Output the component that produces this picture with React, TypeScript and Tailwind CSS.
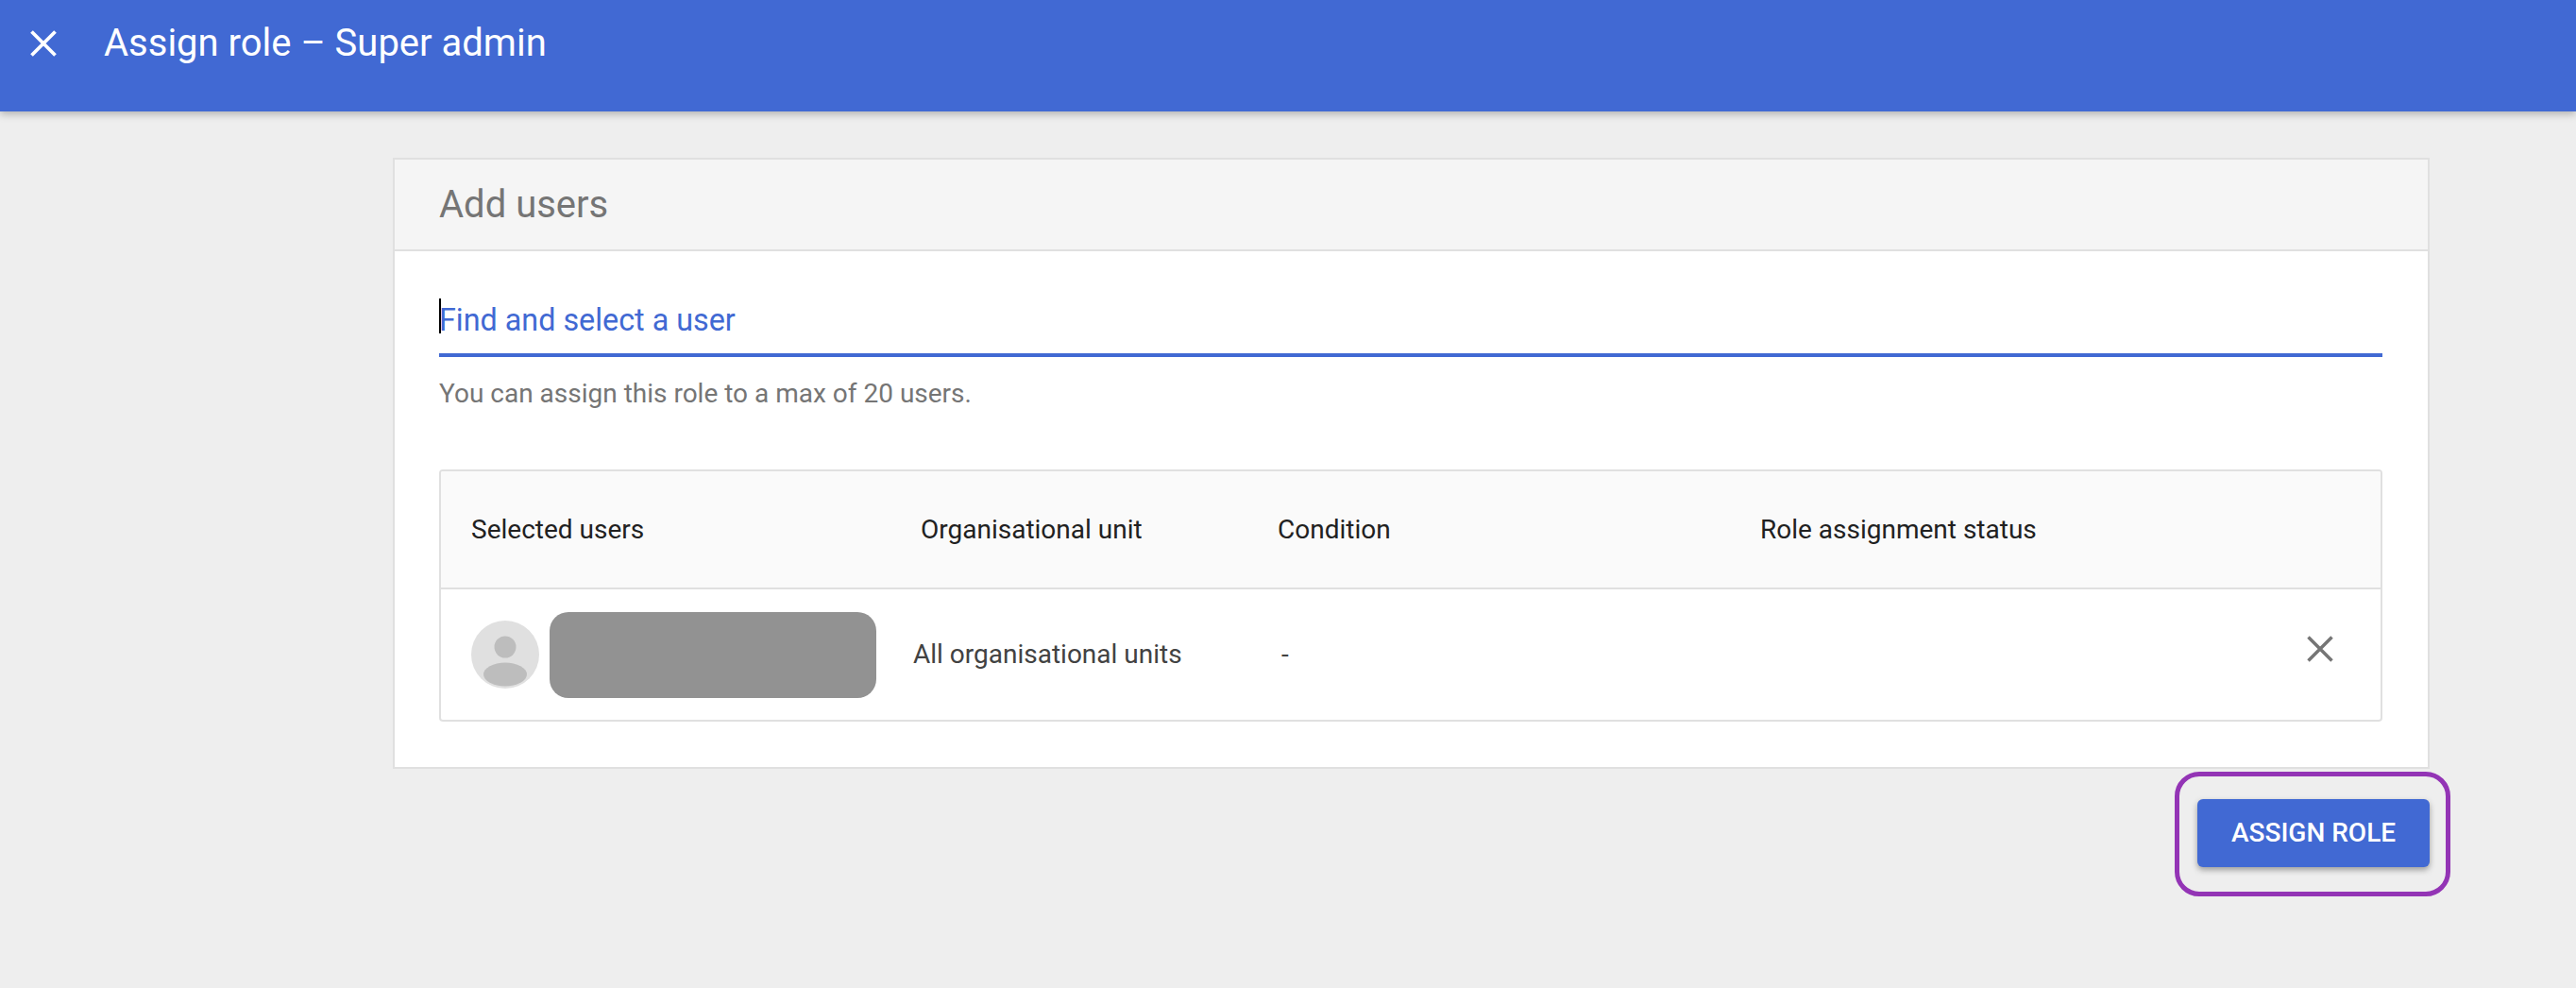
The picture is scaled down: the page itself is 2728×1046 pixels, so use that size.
import React from 'react';

const Cross: React.FC<{ className: string; stroke: number }> = ({ className, stroke }) => (
    <svg className={className} viewBox="0 0 24 24" fill="none" stroke="currentColor" strokeWidth={stroke}>
        <path d="M2 2 L22 22 M22 2 L2 22" />
    </svg>
);

const Avatar: React.FC = () => (
    <svg className="w-[72px] h-[72px] shrink-0" viewBox="0 0 72 72">
        <defs>
            <clipPath id="avatar-clip"><circle cx="36" cy="36" r="36" /></clipPath>
        </defs>
        <circle cx="36" cy="36" r="36" fill="#e0e0e0" />
        <g clipPath="url(#avatar-clip)">
            <circle cx="36" cy="28" r="11.5" fill="#bdbdbd" />
            <ellipse cx="36" cy="57" rx="23" ry="12.5" fill="#bdbdbd" />
        </g>
    </svg>
);

const App: React.FC = () => {
    return (
        <div className="min-h-[1046px] bg-[#eeeeee] font-['Roboto',sans-serif]">
            <header className="h-[118px] bg-[#4169d3] shadow-[0_3px_8px_rgba(0,0,0,0.25)] text-white flex items-start">
                <div className="w-[110px] pl-[31px] pt-[31px]">
                    <Cross className="w-[30px] h-[30px]" stroke={3} />
                </div>
                <h1 className="text-[40px] leading-[46px] pt-[23px]">Assign role – Super admin</h1>
            </header>

            <main className="pl-[416px] pr-[155px] pt-[49px]">
                <section className="bg-white border-2 border-[#e0e0e0] h-[647px]">
                    <div className="h-[97px] bg-[#f5f5f5] border-b-2 border-[#e0e0e0] pl-[47px] flex items-center text-[40px] text-[#757575]">
                        Add users
                    </div>
                    <div className="pl-[47px] pr-[48px]">
                        <div className="relative h-[112px] border-b-4 border-[#4169d3] flex items-end pb-[15px] text-[32.3px] leading-[40px] text-[#4169d3]">
                            <span className="absolute left-0 top-[50px] w-[2px] h-[37px] bg-black" />
                            Find and select a user
                        </div>
                        <p className="mt-[23px] text-[28px] leading-[32px] text-[#757575]">You can assign this role to a max of 20 users.</p>

                        <div className="mt-[64px] border-2 border-[#e0e0e0] rounded-[4px] overflow-hidden">
                            <div className="h-[125px] bg-[#fafafa] border-b-2 border-[#e0e0e0] flex items-center text-[28px] text-[#212121]">
                                <div className="w-[508px] pl-[32px]">Selected users</div>
                                <div className="w-[378px]">Organisational unit</div>
                                <div className="w-[511px]">Condition</div>
                                <div>Role assignment status</div>
                            </div>
                            <div className="h-[138px] flex items-center text-[28px] text-[#424242]">
                                <div className="pl-[32px] pr-[39px] flex items-center gap-[11px]">
                                    <Avatar />
                                    <div className="w-[346px] h-[91px] rounded-[20px] bg-[#929292]" />
                                </div>
                                <div className="w-[390px]">All organisational units</div>
                                <div className="flex-1">-</div>
                                <div className="pr-[49px] pb-[13px] text-[#757575]">
                                    <Cross className="w-[30px] h-[30px]" stroke={2.8} />
                                </div>
                            </div>
                        </div>
                    </div>
                </section>

                <div className="mt-[32px] flex justify-end">
                    <div className="relative">
                        <button className="w-[246px] h-[72px] rounded-[6px] bg-[#4169d3] text-white text-[28px] font-medium shadow-[0_3px_6px_rgba(0,0,0,0.35)]">
                            ASSIGN ROLE
                        </button>
                        <div className="absolute left-[-24px] right-[-22px] top-[-29px] bottom-[-31px] border-[5px] border-[#9334b5] rounded-[26px] pointer-events-none" />
                    </div>
                </div>
            </main>
        </div>
    );
};

export default App;
